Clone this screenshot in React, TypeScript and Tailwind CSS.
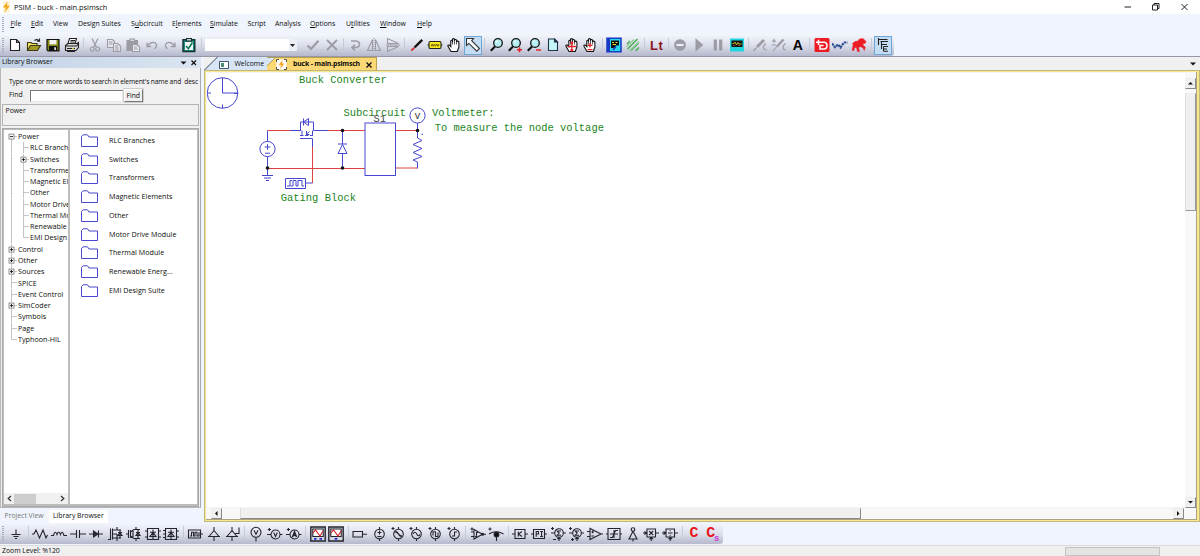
import React from 'react';

interface GlyphProps {
  children: React.ReactNode;
  color?: string;
  active?: boolean;
}

// One toolbar cell, drawn on a 16x16 grid
const Glyph: React.FC<GlyphProps> = ({ children, color = '#24242c', active }) => (
  <button
    className={`flex h-[19px] w-[18.75px] shrink-0 items-center justify-center ${
      active ? 'bg-[#c5ddf2] outline-1 -outline-offset-1 outline-[#6ea6d8]' : ''
    }`}
  >
    <svg width="16" height="16" viewBox="0 0 16 16" fill="none" stroke={color} strokeWidth="1.1">
      {children}
    </svg>
  </button>
);

const Sep = () => (
  <div className="flex h-[15px] w-[5px] shrink-0 justify-center">
    <div className="w-px bg-[#c6c9d6]" />
  </div>
);

const Grip = () => (
  <div className="mr-[2px] ml-[2px] h-[15px] w-[2px] shrink-0 bg-[repeating-linear-gradient(#a8acba_0_1px,transparent_1px_2px)]" />
);

const GRAY = '#9b9ca4';

const Hand = ({ mark }: { mark?: string }) => (
  <>
    <path
      fill="#fff"
      stroke="#111"
      d="M5 14.5 L1.8 9 Q2 7.4 3.6 8.3 L4.8 9.6 V3.8 Q5.6 2.6 6.5 3.8 V2.2 Q7.5 1 8.5 2.2 V3 Q9.5 2 10.6 3.2 V4.4 Q12 3.6 12.9 5 V10 L11.3 14.5 Z"
    />
    <path stroke="#111" strokeWidth=".7" d="M6.5 3.6V7.5M8.5 3V7.5M10.6 4V7.5" />
    {mark && <path stroke="#e2222b" strokeWidth="1.3" d={mark} />}
  </>
);

const Magnifier = ({ mark }: { mark?: string }) => (
  <>
    <path stroke="#111" strokeWidth="2" d="M6 9.5 1.8 13.8" />
    <circle cx="9" cy="6" r="4.3" fill="#b4eef2" stroke="#111" strokeWidth="1.3" />
    <path stroke="#fff" d="M6.8 5.6Q7.5 4 9.2 3.8" />
    {mark && <path stroke="#e2222b" strokeWidth="1.5" d={mark} />}
  </>
);

const Combo = () => (
  <div className="mx-[1px] mr-[7px] flex h-[12px] w-[92px] shrink-0 justify-end bg-white">
    <div className="flex w-[8px] items-center justify-center bg-[#eceef5]">
      <svg width="5" height="3" viewBox="0 0 5 3">
        <path d="M0 0H5L2.5 3Z" fill="#222" />
      </svg>
    </div>
  </div>
);

const MainToolbar = () => (
  <div className="flex h-[22px] w-[894px] shrink-0 items-center rounded-r-[3px] bg-linear-to-b from-[#f4f6fd] via-[#dcdfeb] to-[#b6b8cc]">
    <Grip />
    <Glyph>
      <path fill="#fff" stroke="#222" d="M3.5 2.5H9.5L12.5 5.5V13.5H3.5ZM9.5 2.5V5.5H12.5" />
    </Glyph>
    <Glyph>
      <path fill="#f5e663" stroke="#3c3a10" d="M1.5 13V5.5H5L6 6.5H11V8.5" />
      <path fill="#a39a25" stroke="#3c3a10" d="M1.5 13.5 4.5 8.5H14.5L11.5 13.5Z" />
      <path stroke="#222" d="M8.5 3.5Q11 1.5 13 3.8M13.5 1.5V4.3H11" />
    </Glyph>
    <Glyph>
      <path fill="#858b12" stroke="#111" strokeWidth="1.2" d="M2 2.5H14V13.8H3L2 12.8Z" />
      <path fill="#f2f2f2" stroke="none" d="M4.5 3H11.5V7.4H4.5Z" />
      <path fill="#111" stroke="none" d="M4 9H12.3V14H4Z" />
      <path fill="#ddd" stroke="none" d="M9.3 10.2H11V13H9.3Z" />
    </Glyph>
    <Glyph>
      <path fill="#fff" stroke="#222" d="M5.5 1.5H12.5L11 6.5H4ZM6.5 3.5H11M6 5H10.5" />
      <path fill="#d9d9d9" stroke="#222" d="M1.5 8.5 4 6.5H13L14.5 5.5V10.5L12 13.5H1.5Z" />
      <path stroke="#222" d="M1.5 9H12.5L14.5 6.8M3 14.5H11M3 11.5H11" />
      <path stroke="#c6b820" d="M8 11.5H10" />
    </Glyph>
    <Sep />
    <Glyph color={GRAY}>
      <path strokeWidth="1.3" d="M5 1.5 9.3 10M11 1.5 6.7 10" />
      <circle cx="5.3" cy="12" r="2" />
      <circle cx="10.7" cy="12" r="2" />
    </Glyph>
    <Glyph color={GRAY}>
      <path fill="#e6e7ef" d="M1.5 2.5H6.5L8.5 4.5V10.5H1.5ZM3 5H6.5M3 7H6.5" />
      <path fill="#e6e7ef" d="M7.5 6.5H11.5L14.5 9V14.5H7.5ZM9 9H12M9 11H13M9 13H13" />
    </Glyph>
    <Glyph color={GRAY}>
      <path fill="#9b9ca4" d="M2 3.5H12.5V13.5H2Z" />
      <path fill="#d9dae3" d="M5 2H9.5V4.5H5Z" />
      <path fill="#e9eaf2" d="M7.5 7.5H12L14.5 10V14.5H7.5ZM9 10H12M9 12H13" />
    </Glyph>
    <Glyph color={GRAY}>
      <path strokeWidth="1.3" d="M3 5.5V9.5H7.2M3.2 9.2Q7 4 11 5.8Q14.5 8.5 10.5 11.8" />
    </Glyph>
    <Glyph color={GRAY}>
      <path strokeWidth="1.3" d="M13 5.5V9.5H8.8M12.8 9.2Q9 4 5 5.8Q1.5 8.5 5.5 11.8" />
    </Glyph>
    <Glyph>
      <path fill="#1d8b80" stroke="#12332f" strokeWidth="1.4" d="M2 2.8H13.8V14.5H2Z" />
      <path fill="#f0f8f5" stroke="none" d="M4 5H12V13H4Z" />
      <path fill="#cfd1d6" stroke="#12332f" d="M5.5 1.5H10.5V4H5.5Z" />
      <path stroke="#157a55" strokeWidth="1.7" d="M5 9 7.3 11.7 11.5 5.5" />
    </Glyph>
    <Sep />
    <Combo />
    <Glyph color={GRAY}>
      <path strokeWidth="2.2" d="M2.5 8.5 6 12 13.5 3.8" />
    </Glyph>
    <Glyph color={GRAY}>
      <path strokeWidth="1.8" d="M3 3 13 13M13 3 3 13" />
    </Glyph>
    <Sep />
    <Glyph color={GRAY}>
      <path strokeWidth="1.6" d="M4 4H9Q12.5 4.5 12.5 7.5Q12.3 10.5 8.5 10.5H5.5M8 7.7 5 10.5 8 13.3" />
    </Glyph>
    <Glyph color={GRAY}>
      <path strokeWidth="1.1" d="M6.5 2.5V13.5H1.5ZM9.5 2.5V13.5H14.5Z" />
      <path strokeDasharray="1 1" d="M8 1V15" />
    </Glyph>
    <Glyph color={GRAY}>
      <path strokeWidth="1.1" d="M2.5 1.5V6.5H13.5ZM2.5 14.5V9.5H13.5Z" />
      <path d="M1 8H15" />
    </Glyph>
    <Sep />
    <Glyph>
      <path stroke="#111" strokeWidth="2.4" d="M13.2 2.8 5.5 10.5" />
      <path stroke="#d42a2a" strokeWidth="1.8" d="M5.2 10.8 2.3 13.7" />
    </Glyph>
    <Glyph>
      <rect x="2" y="4.5" width="12" height="7" rx="1.2" fill="#f7ea1f" stroke="#222" />
      <path stroke="#222" d="M.5 8H2M14 8H15.5" />
      <path stroke="#5c5510" strokeWidth=".9" d="M4 9.3 5.2 7 6.2 9.3 7.4 7 8.5 9.3 9.7 7 11 9.3 12 7" />
    </Glyph>
    <Glyph>
      <Hand />
    </Glyph>
    <Glyph active>
      <path fill="#f6f9fd" stroke="#333" d="M1.5 1.5H8.5L6.7 3.6 14.5 11.5 11.8 14.2 3.9 6.4 1.5 8.5Z" />
    </Glyph>
    <Sep />
    <Glyph>
      <Magnifier />
    </Glyph>
    <Glyph>
      <Magnifier mark="M10 12.8H15M12.5 10.3V15.3" />
    </Glyph>
    <Glyph>
      <Magnifier mark="M10 13H15" />
    </Glyph>
    <Glyph>
      <path fill="#c5f6f8" stroke="#234" d="M3.5 2H9.5L12.5 5V13.5H3.5Z" />
      <path fill="#234" stroke="#234" d="M9.5 2V5H12.5Z" />
    </Glyph>
    <Glyph>
      <Hand mark="M7.8 5V14M3.5 9.5H12M6.5 6.3 7.8 5 9 6.3M6.5 12.5 7.8 14 9 12.5" />
    </Glyph>
    <Glyph>
      <Hand mark="M5.5 8.3H10.5M8 6V10.6M5.5 12.7H10.5" />
    </Glyph>
    <Sep />
    <Glyph>
      <path fill="#20dbe8" stroke="#1739c6" strokeWidth="1.5" d="M1 1.3H15V14.7H1Z" />
      <path fill="#1739c6" stroke="none" d="M1 1H4V15H1Z" />
      <path fill="#111" stroke="none" d="M5 3.5H13V8.5H9.5V11H5Z" />
      <path stroke="#e2d325" d="M6 5.5H8M9.5 5.5H11.5M6.5 7.5H10" />
      <path stroke="#1739c6" strokeWidth="1.5" d="M7 13 10 9.5" />
    </Glyph>
    <Glyph color="#49ad56">
      <path strokeWidth="1.5" d="M2 7 5 4M2.5 12 12.5 2M6 13.5 13.5 6M10.5 14 14 10.5" />
      <path stroke="#8ccd92" d="M1.5 9.5 9 2.5M4.5 14 14 4.5" />
    </Glyph>
    <Sep />
    <button className="flex h-[19px] w-[18.75px] shrink-0 items-center justify-center font-['Liberation_Sans'] text-[13px] font-bold tracking-[.4px] text-[#8c1620]">
      Lt
    </button>
    <Sep />
    <Glyph color={GRAY}>
      <circle cx="8" cy="8" r="5.3" fill="#9b9ca4" />
      <path stroke="#eef" strokeWidth="2" d="M4.5 8H11.5" />
    </Glyph>
    <Glyph color={GRAY}>
      <path fill="#9b9ca4" d="M5 2.5 11.5 8 5 13.5Z" />
    </Glyph>
    <Glyph color={GRAY}>
      <path strokeWidth="3.2" d="M5.3 2.5V13.5M10.7 2.5V13.5" />
    </Glyph>
    <Glyph>
      <path fill="#20d5df" stroke="none" d="M1 1.5H15V14.5H1Z" />
      <path fill="#101510" stroke="none" d="M2.5 3.5H13.5V10H2.5Z" />
      <path stroke="#d8c82c" strokeWidth=".9" d="M3.5 6.5H5L6 5 7.5 8 9 5.5 10 7H12.5" />
      <path stroke="#c33" strokeWidth=".8" d="M4 8.5H6M9 8.6H11" />
    </Glyph>
    <Sep />
    <Glyph color={GRAY}>
      <path strokeWidth="3" d="M12 3 5 10" />
      <path strokeWidth="1.2" d="M4.5 10.5 1.5 14M14 6.5Q10.5 9 11.5 11T14.5 13" />
    </Glyph>
    <Glyph color={GRAY}>
      <path d="M.8 4H5M3 1.8V6M.8 8H5" />
      <path strokeWidth="2.4" d="M12.5 2.5 5.5 10" />
      <path d="M5 10.5 2 14M14.5 6.5Q11.5 9 12 11T15 13" />
    </Glyph>
    <button className="flex h-[19px] w-[18.75px] shrink-0 items-center justify-center font-['Liberation_Sans'] text-[14px] font-bold text-black">
      A
    </button>
    <Sep />
    <Glyph>
      <rect x=".5" y="1" width="15" height="14" rx="1.5" fill="#ec1b24" stroke="none" />
      <path stroke="#fff" strokeWidth="1.5" d="M2 5.2H7M4.5 2.8V8M7 5.2H10.5Q13 5.5 13 8.5Q13 12 10 12H6V8.5H9.5" />
    </Glyph>
    <Glyph color="#2d4d91">
      <path strokeWidth="2.2" strokeDasharray="2.4 .7" d="M0 6.5 3 10.2 6 7.5 8.5 10.5 11 7 12.5 5.5 15.5 5.5" />
    </Glyph>
    <Glyph color="#ec1b24">
      <path
        fill="#ec1b24"
        strokeWidth=".5"
        d="M1 13 2.2 8 1.5 6.5 4 4.5 7 4 8.5 2 12 1.5 15 4.5 14.2 6.5 12.5 6 12 8.5 14.3 10 13.3 13.5 12 10.7 9.5 9.7 7.5 10.5 8.5 14.5 6.5 14.5 5.5 10.5 3.5 10.5 3 13.5Z"
      />
    </Glyph>
    <Sep />
    <Glyph active>
      <path stroke="#222" strokeWidth="1.1" d="M3.5 1V8M3.5 2.5H12.5M5.5 4.5H13M6.5 4.5V12M6.5 7.5H12M8.5 9.5H13M8.5 9.5V14.5M9 12H12M9 14.3H13" />
    </Glyph>
  </div>
);

const Source = ({ d, plus }: { d: string; plus?: boolean }) => (
  <Glyph>
    <circle cx="8.5" cy="8" r="4.8" />
    <path d={`M8.5 1V3.2M8.5 12.8V15${d}`} />
    {plus && <path d="M1.5 2.5H4.5M3 1V4" />}
  </Glyph>
);

const ElementToolbar = () => (
  <div className="flex h-[20px] w-[723px] shrink-0 items-center rounded-r-[3px] bg-linear-to-b from-[#f1f3fb] via-[#dcdfeb] to-[#b6b8cc] pb-px">
    <Grip />
    <div className="w-px shrink-0" />
    <Glyph>
      <path d="M8 3.5V8M3.5 8.5H12.5M5.5 10.5H10.5M7 12.5H9" />
    </Glyph>
    <Sep />
    <Glyph>
      <path d="M0 8H2L4 4 7.5 12 11 4 14 12 15.5 9" />
    </Glyph>
    <Glyph>
      <path d="M0 9.5H2.5Q4.2 3.5 6 8.5Q7.7 3.5 9.5 8.5Q11.2 3.5 13 9.5H16" />
    </Glyph>
    <Glyph>
      <path d="M0 8H6.5M6.5 4V12M9.5 4V12M9.5 8H16" />
    </Glyph>
    <Glyph>
      <path d="M1 8H5M10.5 8H15M10.5 4.5V11.5" />
      <path fill="#2e2e36" d="M5.5 5V11L10 8Z" />
    </Glyph>
    <Glyph>
      <path d="M1 13.5H3.5V2.5M5.5 2.5V13.5M5.5 4H14M5.5 8H10M5.5 12H14M10 1V4M10 12V15M13 4V12M11 9.5H15L13 6.5ZM11 6.5H15M10 8V12" />
    </Glyph>
    <Glyph>
      <path d="M0 8H2.5M2.5 4V12M4.5 4V12M4.5 6 8 3.5H14M4.5 10 8 12.5H14M10 1V3.5M10 12.5V15M12 3.5V12.5M10 9.5H14L12 6.5ZM10 6.5H14M7 4V12" />
    </Glyph>
    <Glyph>
      <path d="M2.5 2.5H13.5V13.5H2.5ZM0 5H2.5M0 11H2.5M13.5 5H16M13.5 11H16M8 3.5V13M5 10.5H11L8 6.5ZM5 6.3H11" />
    </Glyph>
    <Glyph>
      <path d="M2.5 2.5H13.5V13.5H2.5ZM0 4.5H2.5M0 8H2.5M0 11.5H2.5M13.5 5H16M13.5 11H16M8 3.5V13M5 10.5H11L8 6.5ZM5 6.3H11" />
    </Glyph>
    <Sep />
    <Glyph>
      <path d="M1.5 4H13.5V12H1.5ZM13.5 8H16M3 10H4.5V6.3H6.5V10H8V6.3H10V10H12V6.3" />
    </Glyph>
    <Glyph>
      <path d="M8 1V5M3 10.5 8 4.5 13 10.5M2 10.5H14M8 10.5V15" />
    </Glyph>
    <Glyph>
      <path d="M7 1V5M2 10.5 7 4.5 12 10.5M1 10.5H13M7 10.5V15M9 7.5H14V1.5" />
    </Glyph>
    <Sep />
    <Glyph>
      <circle cx="8" cy="6.3" r="5" />
      <path d="M8 11.3V15.5M6 4.3 8 8.3 10 4.3" />
    </Glyph>
    <Glyph>
      <circle cx="8.5" cy="8.5" r="4.5" />
      <path d="M0 8.5H4M13 8.5H15.5M6.7 6.5 8.5 10.5 10.3 6.5M.8 3.5H4M2.4 2V5" />
    </Glyph>
    <Glyph>
      <circle cx="8.5" cy="8.5" r="4.5" />
      <path d="M0 8.5H4M13 8.5H15.5M.8 3.5H4M2.4 2V5" />
      <path strokeWidth="1.5" d="M6.5 11 8.5 5.8 10.5 11M7 9.3H10" />
    </Glyph>
    <Sep />
    <Glyph>
      <path fill="#d5d7e1" strokeWidth="1.4" d="M.8 1H15.2V15H.8Z" />
      <path fill="#fff" d="M2.8 3H13.2V10.5H2.8Z" />
      <path stroke="#d4202a" d="M3 7 5.5 4 10 10 13 5" />
      <path stroke="#2424d0" strokeWidth="1.8" d="M4 12.8H6.5M9.5 12.8H12" />
    </Glyph>
    <Glyph>
      <path fill="#d5d7e1" strokeWidth="1.4" d="M.8 1H15.2V15H.8Z" />
      <path fill="#fff" d="M2.8 3H13.2V10.5H2.8Z" />
      <path stroke="#d4202a" d="M3 7 5.5 4 10 10 13 5" />
      <path stroke="#2424d0" strokeWidth="1.8" d="M6.7 12.8H9.3" />
    </Glyph>
    <Sep />
    <Glyph>
      <path d="M1 5.5H10.5V11H1ZM10.5 8.3H15" />
    </Glyph>
    <Source d="M6.5 6.5H10.5M8.5 4.5V8.5M6.5 10.5H10.5" />
    <Source plus d="M5.5 7Q7 4.5 8.5 8T11.5 9M5.5 5 11.5 11" />
    <Source plus d="M5 8Q7 4.5 8.7 8T12 8.2" />
    <Source plus d="M6 9.5V5.8H8.5V10.5H11V6.5" />
    <Source plus d="M6 10H8.5V6H11" />
    <Sep />
    <Glyph>
      <path d="M4 3.5V13L12.5 8.2ZM1 6H4M1 10.5H4M13 8.2H16M.5 3H3.5M2 1.5V4.5" />
      <circle cx="12.7" cy="8.2" r="1" />
      <path d="M5 10.5H6.5V6.5H8" />
    </Glyph>
    <Glyph>
      <path d="M.5 3H3.5M2 1.5V4.5M1 8Q8 3.5 15.5 8M8.5 10V15" />
      <circle cx="8.5" cy="8.5" r="2.4" fill="#111" />
    </Glyph>
    <Sep />
    <Glyph>
      <path d="M3 3.5H13V12.5H3ZM0 8H3M13 8H16M6.3 5.5V10.5M10 5.5 6.5 8 10 10.5" />
    </Glyph>
    <Glyph>
      <path d="M2.5 3.5H13.5V12.5H2.5ZM0 8H2.5M13.5 8H16M5.2 10.8V5.5H7.5V8H5.2M9.2 5.5H12M10.6 5.5V10.5M9.2 10.5H12" />
    </Glyph>
    <Glyph>
      <circle cx="9" cy="7" r="4.3" />
      <path d="M1 7H4.7M13.3 7H16M9 11.3V15M7.3 13 9 11.5 10.7 13M11 5H7.2L9.2 7 7.2 9.2H11M1 2.5H4M2.5 1V4M3 13.5H6" />
    </Glyph>
    <Glyph>
      <circle cx="9" cy="7" r="4.3" />
      <path d="M1 7H4.7M13.3 7H16M9 11.3V15M7.3 13 9 11.5 10.7 13M11 5H7.2L9.2 7 7.2 9.2H11M1 2.5H4M2.5 1V4M3 13.5H6M4.5 12V15" />
    </Glyph>
    <Glyph>
      <path d="M3 2.5V13.5L14 8ZM0 5.5H3M0 10.5H3M14 8H16M4.3 6H7M5.6 4.8V7.3M4.3 10H7" />
    </Glyph>
    <Glyph>
      <path d="M2 2.5H14V13.5H2ZM0 8H2M14 8H16M4 11.5H6.5L9.5 4.5H12M4 8H12M8 4V12" />
    </Glyph>
    <Glyph>
      <circle cx="8" cy="3.5" r="1.8" />
      <path d="M8 5.3 4 13H12ZM8 13V15.5" />
    </Glyph>
    <Glyph>
      <path d="M4 3H12.5V11H4ZM0 7H4M12.5 7H16M8.2 11V15M6.5 13 8.2 11.5 10 13M6.2 5 10.2 9M10.2 5 6.2 9M1.5 5.3 3.5 7 1.5 8.7" />
    </Glyph>
    <Glyph>
      <path d="M4 3H12.5V11H4ZM0 7H4M12.5 7H16M8.2 11V15M6.5 13 8.2 11.5 10 13M6 7H10.5M8.2 4.3V5.3M8.2 8.8V9.8M1.5 5.3 3.5 7 1.5 8.7" />
    </Glyph>
    <Sep />
    <button className="flex h-[19px] w-[18.75px] shrink-0 items-center justify-center font-['Liberation_Mono'] text-[15px] font-bold text-[#e8151c]">
      C
    </button>
    <button className="flex h-[19px] w-[18.75px] shrink-0 items-center justify-center font-['Liberation_Mono'] text-[15px] font-bold text-[#e8151c]">
      C<span className="-ml-px self-end text-[8px] text-[#c832d8]">S</span>
    </button>
  </div>
);

const menuItems = [
  { name: 'File', key: 0, width: 'w-[20.5px]' },
  { name: 'Edit', key: 0, width: 'w-[22px]' },
  { name: 'View', key: -1, width: 'w-[25px]' },
  { name: 'Design Suites', key: -1, width: 'w-[53px]' },
  { name: 'Subcircuit', key: 1, width: 'w-[41px]' },
  { name: 'Elements', key: 1, width: 'w-[38px]' },
  { name: 'Simulate', key: 0, width: 'w-[37.5px]' },
  { name: 'Script', key: -1, width: 'w-[27.5px]' },
  { name: 'Analysis', key: -1, width: 'w-[35px]' },
  { name: 'Options', key: 0, width: 'w-[36px]' },
  { name: 'Utilities', key: 1, width: 'w-[34px]' },
  { name: 'Window', key: 0, width: 'w-[37px]' },
  { name: 'Help', key: 0, width: 'w-[20px]' },
];

const treeItems = [
  { name: 'Power', level: 0, box: '-' },
  { name: 'RLC Branches', level: 1 },
  { name: 'Switches', level: 1, box: '+' },
  { name: 'Transformers', level: 1 },
  { name: 'Magnetic Elements', level: 1 },
  { name: 'Other', level: 1 },
  { name: 'Motor Drive Module', level: 1 },
  { name: 'Thermal Module', level: 1 },
  { name: 'Renewable Energy', level: 1 },
  { name: 'EMI Design Suite', level: 1, last: true },
  { name: 'Control', level: 0, box: '+' },
  { name: 'Other', level: 0, box: '+' },
  { name: 'Sources', level: 0, box: '+' },
  { name: 'SPICE', level: 0 },
  { name: 'Event Control', level: 0 },
  { name: 'SimCoder', level: 0, box: '+' },
  { name: 'Symbols', level: 0 },
  { name: 'Page', level: 0 },
  { name: 'Typhoon-HIL', level: 0, last: true },
];

const folders = [
  'RLC Branches',
  'Switches',
  'Transformers',
  'Magnetic Elements',
  'Other',
  'Motor Drive Module',
  'Thermal Module',
  'Renewable Energ...',
  'EMI Design Suite',
];

const TreeRow = ({ item, first }: { item: (typeof treeItems)[number]; first: boolean }) => {
  const x = item.level === 0 ? 7.5 : 19.5;
  return (
    <div className="flex h-[11.28px] items-center whitespace-nowrap">
      <svg
        width="26"
        height="11.28"
        viewBox="0 0 26 11.28"
        fill="none"
        className={`shrink-0 ${item.level === 0 ? '-mr-[12px]' : ''}`}
      >
        <path
          stroke="#b4b4b4"
          strokeWidth=".8"
          d={`M${x} ${first ? 5.6 : 0}V${item.last ? 5.6 : 11.3}M${x} 5.6H${x + 5.5}${item.level ? 'M7.5 0V11.3' : ''}`}
        />
        {item.box && (
          <>
            <rect x={x - 2.5} y="3.1" width="5" height="5" fill="#fff" stroke="#777" strokeWidth=".8" />
            <path
              stroke="#111"
              strokeWidth=".9"
              d={`M${x - 1.5} 5.6H${x + 1.5}${item.box === '+' ? `M${x} 4.1V7.1` : ''}`}
            />
          </>
        )}
      </svg>
      <span>{item.name}</span>
    </div>
  );
};

const LibraryBrowser = () => (
  <aside className="flex w-[201px] shrink-0 flex-col">
    <div className="flex h-[11px] shrink-0 items-center bg-linear-to-r from-[#c3d3e6] to-[#dbe5f2] pl-[2px]">
      <span className="flex-1">Library Browser</span>
      <svg width="22" height="10" viewBox="0 0 22 10" fill="none" stroke="#111">
        <path fill="#111" stroke="none" d="M1.5 3.5H7.5L4.5 6.5Z" />
        <path strokeWidth="1.2" d="M12.5 2.5 17 7M17 2.5 12.5 7" />
      </svg>
    </div>
    <div className="flex h-[440px] shrink-0 flex-col border-x border-b border-[#b8b8b8] border-r-[#a8a8b0] bg-[#f0f0f0] px-px">
      <div className="h-[19px] overflow-hidden pt-[8.5px] pl-[7px] text-[6.7px] leading-[10px] tracking-[-.14px] whitespace-pre">
        Type one or more words to search in element's name and  desc
      </div>
      <div className="mt-[1.5px] flex h-[14px] items-center pl-[7px]">
        <span className="w-[21px]">Find</span>
        <div className="h-[12px] w-[93px] border border-[#e8e8e8] border-t-[#777] border-l-[#777] bg-white" />
        <button className="ml-px h-[13px] w-[18.5px] border border-[#777] border-t-white border-l-white bg-[#f0f0f0] leading-[10px] shadow-[0_0_0_.5px_#aaa]">
          Find
        </button>
      </div>
      <div className="mt-[1px] h-[22px] border border-[#b4b4b4] pt-[1px] pl-[2.5px] leading-[10px]">Power</div>
      <div className="mt-[2.5px] flex flex-1 gap-[2px] border border-[#a8a8a8] bg-[#bdbdbd] p-px pb-[2px] text-[7.15px] tracking-[.03px]">
        <div className="flex w-[64px] shrink-0 flex-col overflow-hidden bg-white">
          <div className="flex-1 pt-px">
            {treeItems.map((item, i) => (
              <TreeRow key={i} item={item} first={i === 0} />
            ))}
          </div>
          <div className="flex h-[11px] items-center justify-between bg-[#f0f0f0] px-[3px]">
            <svg width="5" height="7" viewBox="0 0 5 7" fill="none" stroke="#333" strokeWidth="1.2">
              <path d="M4 1 1.2 3.5 4 6" />
            </svg>
            <div className="mr-[22px] h-[10px] w-[22px] bg-[#cdcdcd]" />
            <svg width="5" height="7" viewBox="0 0 5 7" fill="none" stroke="#333" strokeWidth="1.2">
              <path d="M1 1 3.8 3.5 1 6" />
            </svg>
          </div>
        </div>
        <div className="flex-1 bg-white pt-[1px]">
          {folders.map((name) => (
            <div key={name} className="flex h-[18.78px] items-center gap-[11px] pl-[11px]">
              <svg width="17" height="13" viewBox="0 0 17 13" fill="none" stroke="#4848d0">
                <path d="M.5 12.5V2.5L2 .8H6.5L8 3H16.5V12.5Z" />
              </svg>
              <span>{name}</span>
            </div>
          ))}
        </div>
      </div>
    </div>
    <div className="flex h-[15px] shrink-0 pt-[2px]">
      <span className="w-[49px] pl-[4.5px] leading-[12px] text-[#777]">Project View</span>
      <span className="w-[59px] bg-white pl-[4px] leading-[12px]">Library Browser</span>
    </div>
  </aside>
);

const ScrollButton = ({ d }: { d: string }) => (
  <div className="h-[11px] w-[11px] shrink-0 border border-[#888] border-t-[#eee] border-l-[#eee] bg-[#f0f0f0]">
    <svg width="9" height="9" viewBox="0 0 9 9">
      <path d={d} fill="#111" />
    </svg>
  </div>
);

const Schematic = () => (
  <svg
    width="978"
    height="434"
    viewBox="207 73 978 434"
    fill="none"
    stroke="#4646cf"
    strokeWidth="1"
    className="shrink-0 bg-white"
  >
    {/* Simulation control clock */}
    <circle cx="222.5" cy="93" r="15.3" />
    <path d="M222.5 78V93H237.5M207.5 93H211M234 93.5H238M222.5 104.5V108" />

    {/* Wires */}
    <path
      stroke="#dc4343"
      d="M267.5 130.5H291M327 130.5H365M395.5 130.5H417.5M267.5 168.5H365M395.5 168H417.5M312.5 146V183"
    />

    {/* Voltage source and ground */}
    <circle cx="267.5" cy="149" r="7.6" />
    <path d="M267.5 130.5V141.4M267.5 156.6V175.5M264.7 147H270.3M267.5 144.2V149.8M265 153.2H270M262 175.5H273M264 178H271M266 180.5H269" />

    {/* MOSFET */}
    <path d="M290 130.5H301M300.5 130.5V122H313.5V130.5H328M303.5 122 308.5 118.5V125.5ZM303.5 118.5V125.5" />
    <path d="M300 135.5H303.5M305 135.5H308.5M310 135.5H313M302 135V130.5M306 134.5 309.5 131.5M306.5 131V134.5H309.5M312.5 130.5V135M300 138.5H312.5V147" />

    {/* Gating block */}
    <path d="M285.5 178.5H305.5V188.5H285.5ZM305.5 183H312.5M287 186H290V180.5H292M290.5 186H293V180.5H296V186H298V180.5H302V186H304" />

    {/* Diode */}
    <path d="M342.5 130.5V144M342.5 153.5V168M338 144H347M338 153.5H347L342.5 144.5Z" />

    {/* Subcircuit */}
    <rect x="365" y="123" width="30.5" height="52.5" />

    {/* Voltmeter and load */}
    <circle cx="417.5" cy="115.5" r="7.6" />
    <path d="M417.5 123V138L422 140.5 413 144.5 422 148.5 413 152.5 422 156.5 413 160 417.5 162V168.5M421.5 134.3H423" />

    <g fill="#111" stroke="none">
      <circle cx="267.5" cy="168" r="1.8" />
      <circle cx="342.5" cy="130.5" r="1.8" />
      <circle cx="342.5" cy="168" r="1.8" />
      <circle cx="417.5" cy="130.5" r="1.8" />
    </g>

    <g stroke="none" fill="#228422" fontSize="10.45" className="font-['Liberation_Mono',monospace] tracking-normal">
      <text x="299" y="83">Buck Converter</text>
      <text x="343.5" y="115.5">Subcircuit</text>
      <text x="432" y="115.5">Voltmeter:</text>
      <text x="434.8" y="131.3">To measure the node voltage</text>
      <text x="280.8" y="201.3">Gating Block</text>
      <text x="373.5" y="121.5" fill="#444">S1</text>
      <text x="414.8" y="118.5" fontSize="9" fill="#222">V</text>
    </g>
  </svg>
);

const DocumentArea = () => (
  <main className="flex flex-1 flex-col pl-[3px]">
    <div className="flex h-[13px] shrink-0 items-stretch bg-[#f0f0f0]">
      <div className="flex w-[63px] items-center bg-[linear-gradient(135deg,transparent_9px,#8f98a8_9px_10px,#d8e5f6_10px)] pt-[2px] pl-[15px]">
        <svg width="10" height="8" viewBox="0 0 10 8" fill="#fff" stroke="#456" className="mr-[5.5px] shrink-0">
          <path d="M.5 .5H9.5V7.5H.5Z" />
          <path fill="#4a8a78" stroke="none" d="M2 2H5V6H2Z" />
        </svg>
        <span>Welcome</span>
      </div>
      <div className="flex w-[110px] items-center border-t border-r border-[#b8a050] bg-[linear-gradient(135deg,#d8e5f6_5px,#b8a050_5px_6px,#fbd873_6px)] pt-px pl-[9px]">
        <svg width="11" height="11" viewBox="0 0 11 11" fill="none" stroke="#555" className="mr-[6px] shrink-0">
          <path fill="#fff" stroke="none" d="M.5 .5H10.5V10.5H.5Z" />
          <path strokeDasharray="2.5 5 2.5 0" d="M.5 .5H10.5V10.5H.5Z" />
          <path fill="#f5a623" stroke="none" d="M6.5 1 2.5 6H5L4 10 8.5 4.5H6Z" />
        </svg>
        <span className="flex-1 text-[6.9px] font-bold tracking-[-.17px] whitespace-nowrap">buck - main.psimsch</span>
        <svg width="6" height="6" viewBox="0 0 6 6" stroke="#111" strokeWidth="1.3" className="mr-[4px]">
          <path d="M.5 .5 5.5 5.5M5.5 .5 .5 5.5" />
        </svg>
      </div>
      <div className="flex flex-1 items-center justify-end pr-[4px]">
        <svg width="6" height="4" viewBox="0 0 6 4">
          <path d="M0 .5H6L3 3.5Z" fill="#111" />
        </svg>
      </div>
    </div>
    <div className="flex h-[452px] flex-col border border-[#c0b682] bg-[#fae88c] p-[1px] pr-[2px] pb-[2px]">
      <div className="flex flex-1 flex-col border-r border-b border-[#aaa480] bg-[#f4f4f4]">
        <div className="flex h-[436px] pt-px pl-px">
          <Schematic />
          <div className="flex flex-1 flex-col bg-[#f8f8f8] pt-[5px]">
            <ScrollButton d="M2 5.5H7L4.5 3Z" />
            <div className="mt-[4px] h-[118px] w-[11px] border border-[#999] border-t-[#eee] border-l-[#ddd] bg-[#f0f0f0]" />
            <div className="flex-1" />
            <ScrollButton d="M2 3H7L4.5 5.5Z" />
          </div>
        </div>
        <div className="flex flex-1 bg-[#f8f8f8] pr-[12px] pl-[5px]">
          <ScrollButton d="M5.5 2V7L3 4.5Z" />
          <div className="ml-[18px] h-[11px] w-[621px] border border-[#888] border-t-[#eee] border-l-[#ddd] bg-[#f0f0f0]" />
          <div className="flex-1" />
          <ScrollButton d="M3 2V7L5.5 4.5Z" />
        </div>
      </div>
    </div>
  </main>
);

const App = () => (
  <div className="flex h-[556px] w-[1200px] flex-col overflow-hidden bg-[#f0f4fd] font-['Open_Sans','Noto_Sans',sans-serif] text-[6.9px] leading-none tracking-[-.02px] text-[#0c0c0c]">
    {/* Title bar */}
    <header className="flex h-[14px] shrink-0 items-center bg-white pl-[2px]">
      <svg width="9" height="12" viewBox="0 0 9 12">
        <path d="M1 0H8V12H1Z" fill="#fdf3d8" />
        <path d="M5.5 .5 .8 6.5H3.8L2.5 11.5 8 4.8H5Z" fill="#f5a81c" />
      </svg>
      <span className="ml-[3px] pt-px text-[7.4px]">PSIM - buck - main.psimsch</span>
      <svg width="76" height="12" viewBox="0 0 76 12" fill="none" stroke="#222" strokeWidth="1" className="ml-auto">
        <path d="M.5 6H7" />
        <path d="M28.5 4H33.5V9H28.5ZM30 4V2.5H35V7.5H33.5M57.5 3 63.5 9M63.5 3 57.5 9" />
      </svg>
    </header>

    {/* Menu bar */}
    <nav className="flex h-[20px] shrink-0 items-center pt-px">
      <Grip />
      <div className="w-[4.5px]" />
      {menuItems.map((item) => (
        <span key={item.name} className={`${item.width} shrink-0 whitespace-nowrap`}>
          {item.key < 0 ? (
            item.name
          ) : (
            <>
              {item.name.slice(0, item.key)}
              <u className="underline-offset-1">{item.name[item.key]}</u>
              {item.name.slice(item.key + 1)}
            </>
          )}
        </span>
      ))}
    </nav>

    <MainToolbar />

    <div className="flex h-[467px] shrink-0 border-t border-[#9696a4]">
      <LibraryBrowser />
      <DocumentArea />
    </div>
    <div className="h-px shrink-0" />

    <ElementToolbar />

    {/* Status bar */}
    <footer className="mt-px flex h-[11px] shrink-0 items-center border-t border-[#dcdcdc] bg-[#f0f0f0] pl-[2px]">
      <span className="flex-1">Zoom Level: %120</span>
      <div className="mr-[40px] h-[9px] w-[95px] border border-[#c4c4c4] bg-[#e4e4e4]" />
    </footer>
  </div>
);

export default App;
